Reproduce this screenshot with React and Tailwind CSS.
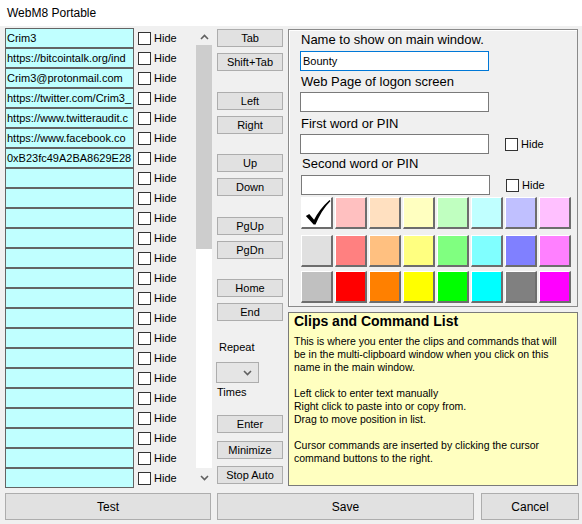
import React from "react";

const FONT = "font-['Liberation_Sans',Arial,sans-serif]";

const clips = [
  "Crim3",
  "https://bitcointalk.org/ind",
  "Crim3@protonmail.com",
  "https://twitter.com/Crim3_",
  "https://www.twitteraudit.c",
  "https://www.facebook.co",
  "0xB23fc49A2BA8629E28",
];
const rows = [...clips, ...Array(16).fill("")];

const swatches = [
  ["#ffffff", "#ffc0c0", "#ffe0c0", "#ffffc0", "#c0ffc0", "#c0ffff", "#c0c0ff", "#ffc0ff"],
  ["#e0e0e0", "#ff8080", "#ffc080", "#ffff80", "#80ff80", "#80ffff", "#8080ff", "#ff80ff"],
  ["#c0c0c0", "#ff0000", "#ff8000", "#ffff00", "#00ff00", "#00ffff", "#808080", "#ff00ff"],
];

function Check() {
  return <div className="w-[13px] h-[13px] border border-[#333333] bg-white shrink-0" />;
}

function Btn({ children, className }) {
  return (
    <div
      className={
        "h-[18px] w-[66px] flex items-center justify-center bg-[#e1e1e1] border border-[#adadad] text-[11px] text-black " +
        (className || "")
      }
    >
      {children}
    </div>
  );
}

function Chevron({ up }) {
  return (
    <svg width="9" height="6" viewBox="0 0 9 6">
      <path
        d={up ? "M1 5 L4.5 1.5 L8 5" : "M1 1 L4.5 4.5 L8 1"}
        fill="none"
        stroke="#606060"
        strokeWidth="1.6"
      />
    </svg>
  );
}

function Swatch({ color, checked }) {
  return (
    <div
      className="w-[32px] h-[32px] border-t border-l border-t-white border-l-white border-r-2 border-b-2 border-r-[#6d6d6d] border-b-[#6d6d6d] flex items-center justify-center"
      style={{ backgroundColor: color }}
    >
      {checked && (
        <svg width="30" height="30" viewBox="0 0 30 30">
          <path
            d="M4 18 L7.5 16 L12.5 22 Q18 11 28.5 1.5 L29.5 2.5 Q20 12 14 27 L12 27 Z"
            fill="#000"
          />
        </svg>
      )}
    </div>
  );
}

export default function App() {
  return (
    <div className={"w-[582px] h-[524px] overflow-hidden bg-[#f0f0f0] text-black " + FONT}>
      {/* Title bar */}
      <div className="h-[26px] bg-white flex items-center pl-[7px] text-[12px]">WebM8 Portable</div>

      {/* Body */}
      <div className="pt-[2px] flex flex-col">
        <div className="flex h-[460px]">
          {/* List of clips */}
          <div className="ml-[5px] w-[129px] flex flex-col">
            {rows.map((t, i) => (
              <div
                key={i}
                className="h-[20px] border border-[#646464] bg-[#c0ffff] pl-[1px] text-[11px] leading-[18px] whitespace-nowrap overflow-hidden"
              >
                {t}
              </div>
            ))}
          </div>

          {/* Hide checkboxes */}
          <div className="ml-[4px] w-[58px] flex flex-col">
            {rows.map((_, i) => (
              <div key={i} className="h-[20px] flex items-center gap-[3px] text-[11px]">
                <Check />
                <span>Hide</span>
              </div>
            ))}
          </div>

          {/* Scrollbar */}
          <div className="w-[16px] flex flex-col">
            <div className="h-[17px] flex items-center justify-center bg-[#f0f0f0]">
              <Chevron up />
            </div>
            <div className="h-[204px] bg-[#cdcdcd]" />
            <div className="flex-1 bg-white" />
            <div className="h-[20px] flex items-center justify-center bg-[#f0f0f0]">
              <Chevron />
            </div>
          </div>

          {/* Command buttons */}
          <div className="ml-[5px] w-[66px] flex flex-col">
            <Btn className="mt-[1px]">Tab</Btn>
            <Btn className="mt-[6px]">Shift+Tab</Btn>
            <Btn className="mt-[21px]">Left</Btn>
            <Btn className="mt-[6px]">Right</Btn>
            <Btn className="mt-[20px]">Up</Btn>
            <Btn className="mt-[6px]">Down</Btn>
            <Btn className="mt-[21px]">PgUp</Btn>
            <Btn className="mt-[6px]">PgDn</Btn>
            <Btn className="mt-[20px]">Home</Btn>
            <Btn className="mt-[6px]">End</Btn>
            <div className="mt-[19px] h-[14px] pl-[2px] text-[11px] leading-[14px]">Repeat</div>
            <div className="mt-[8px] -ml-[1px] h-[21px] w-[43px] bg-[#e5e5e5] border border-[#adadad] flex items-center justify-end pr-[6px]">
              <Chevron />
            </div>
            <div className="mt-[2px] h-[14px] text-[11px] leading-[14px]">Times</div>
            <Btn className="mt-[16px]">Enter</Btn>
            <Btn className="mt-[8px]">Minimize</Btn>
            <Btn className="mt-[7px]">Stop Auto</Btn>
          </div>

          {/* Right column */}
          <div className="ml-[5px] w-[290px] flex flex-col">
            <div className="mt-[1px] h-[278px] border border-[#8a8a8a] shadow-[inset_1px_1px_0_#ffffff] pl-[11px] pt-[2px] flex flex-col">
              <div className="h-[16px] pl-[1px] text-[13px] leading-[16px]">Name to show on main window.</div>
              <div className="mt-[3px] h-[20px] w-[189px] bg-white border border-[#0078d7] pl-[2px] text-[11px] leading-[18px]">
                Bounty
              </div>
              <div className="mt-[3px] h-[16px] pl-[1px] text-[13px] leading-[16px]">Web Page of logon screen</div>
              <div className="mt-[2px] h-[20px] w-[189px] bg-white border border-[#7a7a7a]" />
              <div className="mt-[4px] h-[16px] pl-[1px] text-[13px] leading-[16px]">First word or PIN</div>
              <div className="mt-[2px] flex items-center">
                <div className="h-[20px] w-[189px] bg-white border border-[#7a7a7a]" />
                <div className="ml-[16px] flex items-center gap-[3px] text-[11px]">
                  <Check />
                  <span>Hide</span>
                </div>
              </div>
              <div className="mt-[2px] h-[16px] pl-[2px] text-[13px] leading-[16px]">Second word or PIN</div>
              <div className="mt-[3px] pl-[1px] flex items-center">
                <div className="h-[20px] w-[189px] bg-white border border-[#7a7a7a]" />
                <div className="ml-[16px] flex items-center gap-[3px] text-[11px]">
                  <Check />
                  <span>Hide</span>
                </div>
              </div>
              <div className="mt-[2px] pl-[1px] flex flex-col">
                {swatches.map((row, r) => (
                  <div
                    key={r}
                    className={"flex gap-[2px] " + (r === 1 ? "mt-[6px]" : r === 2 ? "mt-[4px]" : "")}
                  >
                    {row.map((c, i) => (
                      <Swatch key={i} color={c} checked={r === 0 && i === 0} />
                    ))}
                  </div>
                ))}
              </div>
            </div>

            <div className="mt-[5px] h-[174px] bg-[#ffffc0] border border-[#7a7a7a] pl-[5px] pr-[4px]">
              <div className="h-[17px] text-[14px] leading-[17px] font-bold">Clips and Command List</div>
              <div className="mt-[5px] text-[10.5px] leading-[13px]">
                <div>This is where you enter the clips and commands that will</div>
                <div>be in the multi-clipboard window when you click on this</div>
                <div>name in the main window.</div>
                <div className="h-[13px]" />
                <div>Left click to enter text manually</div>
                <div>Right click to paste into or copy from.</div>
                <div>Drag to move position in list.</div>
                <div className="h-[13px]" />
                <div>Cursor commands are inserted by clicking the cursor</div>
                <div>command buttons to the right.</div>
              </div>
            </div>
          </div>
        </div>

        {/* Bottom buttons */}
        <div className="mt-[5px] flex h-[27px]">
          <div className="ml-[5px] w-[206px] bg-[#e1e1e1] border border-[#adadad] flex items-center justify-center text-[12px]">
            Test
          </div>
          <div className="ml-[6px] w-[257px] bg-[#e1e1e1] border border-[#adadad] flex items-center justify-center text-[12px]">
            Save
          </div>
          <div className="ml-[7px] w-[98px] bg-[#e1e1e1] border border-[#adadad] flex items-center justify-center text-[12px]">
            Cancel
          </div>
        </div>
      </div>
    </div>
  );
}
